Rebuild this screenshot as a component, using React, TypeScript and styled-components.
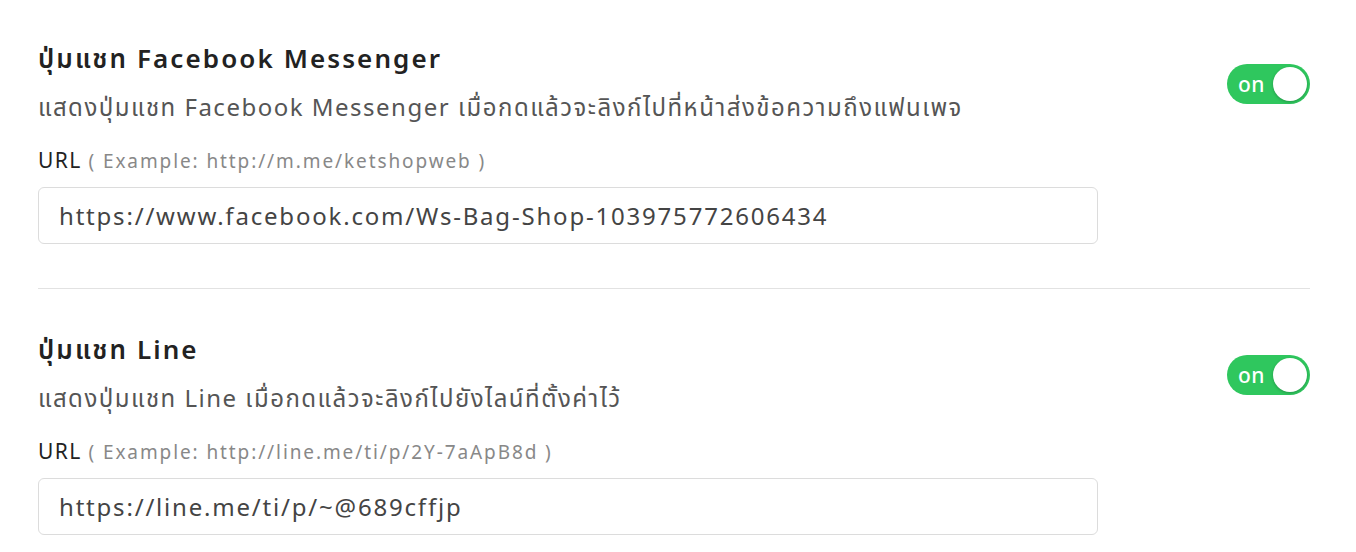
import React, { useState } from 'react';
import styled, { createGlobalStyle } from 'styled-components';

const GlobalStyle = createGlobalStyle`
  body {
    margin: 0;
    background: #fff;
    font-family: 'Noto Sans', 'Noto Sans Thai', sans-serif;
    color: #222;
  }
`;

interface ChatSetting {
    id: string;
    title: string;
    description: string;
    example: string;
    url: string;
}

const settings: ChatSetting[] = [
    {
        id: 'messenger',
        title: 'ปุ่มแชท Facebook Messenger',
        description: 'แสดงปุ่มแชท Facebook Messenger เมื่อกดแล้วจะลิงก์ไปที่หน้าส่งข้อความถึงแฟนเพจ',
        example: 'http://m.me/ketshopweb',
        url: 'https://www.facebook.com/Ws-Bag-Shop-103975772606434',
    },
    {
        id: 'line',
        title: 'ปุ่มแชท Line',
        description: 'แสดงปุ่มแชท Line เมื่อกดแล้วจะลิงก์ไปยังไลน์ที่ตั้งค่าไว้',
        example: 'http://line.me/ti/p/2Y-7aApB8d',
        url: 'https://line.me/ti/p/~@689cffjp',
    },
];

const SettingBlock = ({ item }: { item: ChatSetting }) => {
    const [on, setOn] = useState(true);
    const [value, setValue] = useState(item.url);

    return (
        <Section>
            <Header>
                <TextCol>
                    <Title>{item.title}</Title>
                    <Description>{item.description}</Description>
                </TextCol>
                <Toggle type="button" $on={on} onClick={() => setOn(!on)}>
                    <span>{on ? 'on' : 'off'}</span>
                    <Knob $on={on} />
                </Toggle>
            </Header>
            <Label>
                URL <Hint>( Example: {item.example} )</Hint>
            </Label>
            <UrlInput value={value} onChange={e => setValue(e.target.value)} />
        </Section>
    );
};

export default function App() {
    return (
        <>
            <GlobalStyle />
            <Page>
                {settings.map(s => (
                    <SettingBlock key={s.id} item={s} />
                ))}
            </Page>
        </>
    );
}

const Page = styled.div`
  padding: 40px 46px 0 38px;
  display: flex;
  flex-direction: column;
`;

const Section = styled.section`
  display: flex;
  flex-direction: column;
  padding-bottom: 44px;

  & + & {
    border-top: 1px solid #e2e2e2;
    padding-top: 42px;
  }
`;

const Header = styled.div`
  display: flex;
  align-items: center;
  justify-content: space-between;
`;

const TextCol = styled.div`
  display: flex;
  flex-direction: column;
  gap: 15px;
`;

const Title = styled.h3`
  margin: 0;
  font-size: 26px;
  line-height: 36px;
  font-weight: 600;
  letter-spacing: 2.1px;
  color: #222;
`;

const Description = styled.p`
  margin: 0;
  font-size: 24px;
  line-height: 32px;
  letter-spacing: 1.5px;
  color: #555;
`;

const Label = styled.div`
  margin-top: 23px;
  font-size: 21px;
  line-height: 28px;
  letter-spacing: 1.4px;
  color: #222;
`;

const Hint = styled.span`
  font-size: 19px;
  letter-spacing: 1.9px;
  color: #888;
`;

const UrlInput = styled.input`
  margin-top: 12px;
  width: 1060px;
  height: 57px;
  box-sizing: border-box;
  border: 1px solid #dcdcdc;
  border-radius: 6px;
  padding: 0 20px;
  font-family: inherit;
  font-size: 24px;
  letter-spacing: 1.8px;
  color: #444;
  outline: none;
`;

const Toggle = styled.button<{ $on: boolean }>`
  position: relative;
  margin-top: 5px;
  width: 83px;
  height: 40px;
  border: none;
  border-radius: 20px;
  background: ${p => (p.$on ? '#2fc75e' : '#ccc')};
  padding: 0 0 0 11px;
  cursor: pointer;
  display: flex;
  align-items: center;
  font-family: inherit;
  font-size: 21px;
  font-weight: 500;
  letter-spacing: 0.5px;
  color: #fff;
  flex-shrink: 0;
`;

const Knob = styled.span<{ $on: boolean }>`
  position: absolute;
  top: 3px;
  left: ${p => (p.$on ? '46px' : '3px')};
  width: 34px;
  height: 34px;
  border-radius: 50%;
  background: #fff;
  box-shadow: 0 1px 3px rgba(0, 0, 0, 0.25);
`;
